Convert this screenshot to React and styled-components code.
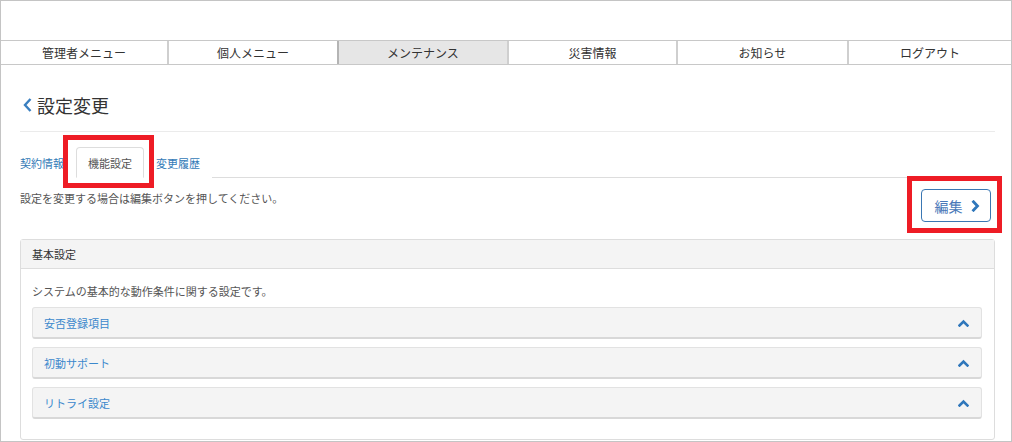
import React from 'react'
import styled, { createGlobalStyle } from 'styled-components'

const GlobalStyle = createGlobalStyle`
    html, body {
        margin: 0;
        padding: 0;
        background: #ffffff;
    }
    body {
        font-family: "Noto Sans CJK JP", "Noto Sans", sans-serif;
        color: #333333;
    }
    * {
        box-sizing: border-box;
    }
`

const menus = ['管理者メニュー', '個人メニュー', 'メンテナンス', '災害情報', 'お知らせ', 'ログアウト']
const tabs = ['契約情報', '機能設定', '変更履歴']
const sections = ['安否登録項目', '初動サポート', 'リトライ設定']

const ChevronUp = () => (
    <svg width="11" height="8" viewBox="0 0 11 8">
        <polyline points="1.5,6.5 5.5,2.5 9.5,6.5" fill="none" stroke="#2f77bb" strokeWidth="2.6" strokeLinecap="square" />
    </svg>
)

const ChevronRight = () => (
    <svg width="9" height="12" viewBox="0 0 9 12">
        <polyline points="2.5,1.8 6.5,6 2.5,10.2" fill="none" stroke="#2f77bb" strokeWidth="2.8" strokeLinecap="square" />
    </svg>
)

const ChevronLeft = () => (
    <svg width="11" height="16" viewBox="0 0 11 16">
        <polyline points="8.5,2 3,8 8.5,14" fill="none" stroke="#3a7fc0" strokeWidth="2.4" />
    </svg>
)

const App = () => {
    return (
        <Frame>
            <GlobalStyle />
            <TopSpace />
            <Nav>
                {menus.map((m) => (
                    <NavItem key={m} active={m === 'メンテナンス'}>{m}</NavItem>
                ))}
            </Nav>
            <Main>
                <TitleRow>
                    <ChevronLeft />
                    <Title>設定変更</Title>
                </TitleRow>
                <TabBar>
                    {tabs.map((t) => (
                        <Tab key={t} active={t === '機能設定'}>
                            {t}
                            {t === '機能設定' && <Highlight />}
                        </Tab>
                    ))}
                </TabBar>
                <DescRow>
                    <Desc>設定を変更する場合は編集ボタンを押してください。</Desc>
                    <EditWrap>
                        <EditButton>
                            編集
                            <ChevronRight />
                        </EditButton>
                        <Highlight />
                    </EditWrap>
                </DescRow>
                <Panel>
                    <PanelHeader>基本設定</PanelHeader>
                    <PanelBody>
                        <BodyText>システムの基本的な動作条件に関する設定です。</BodyText>
                        {sections.map((s) => (
                            <AccordionItem key={s}>
                                <span>{s}</span>
                                <ChevronUp />
                            </AccordionItem>
                        ))}
                    </PanelBody>
                </Panel>
            </Main>
        </Frame>
    )
}

const Frame = styled.div`
    width: 1012px;
    height: 442px;
    border: 1px solid #c4c4c4;
    overflow: hidden;
`
const TopSpace = styled.div`
    height: 39px;
`
const Nav = styled.div`
    display: grid;
    grid-template-columns: 166px 170px 170px 169px 171px 1fr;
    height: 25px;
    border-top: 1px solid #c8c8c8;
    border-bottom: 1px solid #c8c8c8;
`
const NavItem = styled.div`
    display: flex;
    align-items: center;
    justify-content: center;
    font-size: 12px;
    color: #333333;
    border-left: ${(p) => (p.active ? '2px solid #b4b4b4' : '2px solid #cfcfcf')};
    background: ${(p) => (p.active ? '#e6e6e6' : '#ffffff')};
    &:first-child {
        border-left: none;
    }
`
const Main = styled.div`
    padding: 0 16px 0 19px;
`
const TitleRow = styled.div`
    display: flex;
    align-items: center;
    gap: 4px;
    height: 67px;
    padding-top: 14px;
    padding-left: 2px;
    border-bottom: 1px solid #ebebeb;
`
const Title = styled.h1`
    margin: 0;
    font-size: 18px;
    font-weight: 400;
    color: #333333;
    line-height: 1;
`
const TabBar = styled.div`
    display: flex;
    align-items: flex-end;
    margin: 15px -7px 0 -12px;
    height: 31px;
    border-bottom: 1px solid #dddddd;
`
const Tab = styled.div`
    position: relative;
    height: 31px;
    margin-bottom: -1px;
    padding: 0 11px;
    display: flex;
    align-items: center;
    font-size: 11px;
    color: ${(p) => (p.active ? '#555555' : '#337ab7')};
    background: #ffffff;
    border: 1px solid ${(p) => (p.active ? '#dddddd' : 'transparent')};
    border-bottom-color: ${(p) => (p.active ? '#ffffff' : 'transparent')};
    border-radius: 4px 4px 0 0;
    z-index: ${(p) => (p.active ? 2 : 1)};
`
const Highlight = styled.div`
    position: absolute;
    left: -14px;
    right: -11px;
    top: -13px;
    bottom: -11px;
    border: 5px solid #ee1c25;
    pointer-events: none;
    z-index: 3;
`
const DescRow = styled.div`
    display: flex;
    justify-content: space-between;
    align-items: flex-start;
    padding-top: 11px;
    padding-right: 4px;
`
const Desc = styled.p`
    margin: 2px 0 0;
    font-size: 11px;
    color: #555555;
    line-height: 14px;
`
const EditWrap = styled.div`
    position: relative;
    margin-top: 0px;
`
const EditButton = styled.div`
    width: 70px;
    height: 33px;
    border: 1px solid #3a77b3;
    border-radius: 4px;
    display: flex;
    align-items: center;
    justify-content: center;
    gap: 8px;
    font-size: 14px;
    color: #4a78b8;
    padding-left: 2px;
`
const Panel = styled.div`
    margin-top: 17px;
    border: 1px solid #dddddd;
    border-radius: 3px;
`
const PanelHeader = styled.div`
    height: 29px;
    display: flex;
    align-items: center;
    padding-left: 11px;
    background: #f4f4f4;
    border-bottom: 1px solid #dddddd;
    font-size: 11px;
    color: #333333;
`
const PanelBody = styled.div`
    padding: 14px 12px 20px 11px;
    display: flex;
    flex-direction: column;
    gap: 8px;
`
const BodyText = styled.p`
    margin: 0 0 0 0;
    font-size: 11px;
    color: #555555;
    line-height: 16px;
`
const AccordionItem = styled.div`
    height: 32px;
    display: flex;
    align-items: center;
    justify-content: space-between;
    padding: 0 12px 0 11px;
    background: #f4f4f4;
    border: 1px solid #e2e2e2;
    border-bottom: 2px solid #d8d8d8;
    border-radius: 3px;
    font-size: 11px;
    color: #3b88cc;
`

export default App
